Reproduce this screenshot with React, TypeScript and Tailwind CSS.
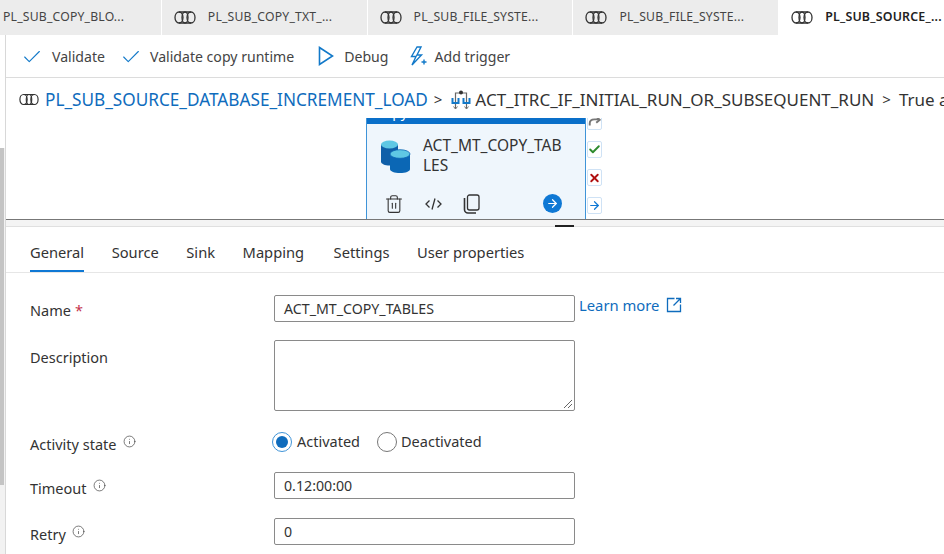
import { ArrowRight, Check, Info, Trash2, X } from 'lucide-react'
import type { ReactNode } from 'react'

const PipelineIcon = ({ className = '' }: { className?: string }) => (
  <svg viewBox="0 0 22 14" className={className} fill="none" stroke="currentColor" strokeWidth="1.3">
    <ellipse cx="5" cy="7" rx="4" ry="5.500" />
    <ellipse cx="11" cy="7" rx="3" ry="5.500" />
    <path d="M5 1.500h12M5 12.500h12" />
    <ellipse cx="17" cy="7" rx="4" ry="5.500" />
  </svg>
)

const IfIcon = () => (
  <svg viewBox="0 0 20 20" className="h-[20px] w-[20px]" fill="none">
    <path d="M4.500 8V3h11v5M4.500 6v13M15.500 6v13" stroke="#666" strokeWidth="1.2" />
    <circle cx="10" cy="2.500" r="2" fill="#333" />
    <path d="M1.500 8v5h6V8M12.500 8v5h6V8" stroke="#1279c9" strokeWidth="2" />
    <path d="M2.500 16.500l2 2.500 2-2.500M13.500 16.500l2 2.500 2-2.500" stroke="#777" strokeWidth="1" />
  </svg>
)

const DatabaseIcon = () => (
  <svg viewBox="0 0 30 33" className="h-[33px] w-[30px]">
    <path d="M0 4.500v17c0 2.500 4 4 8.500 4s8.500-1.500 8.500-4v-17z" fill="#0f5fa8" />
    <ellipse cx="8.500" cy="4.500" rx="8.500" ry="4" fill="#5fc8e4" />
    <path d="M9 14v15c0 2.500 4.500 4 10 4s10-1.500 10-4V14z" fill="#0b67b5" />
    <ellipse cx="19" cy="14" rx="10" ry="4.300" fill="#5fc8e4" stroke="#0b67b5" strokeWidth="0.8" />
  </svg>
)

const PlayIcon = () => (
  <svg viewBox="0 0 16 20" className="h-[20px] w-[16px] shrink-0" fill="none" stroke="#1279c9" strokeWidth="1.6">
    <path d="M1.500 1.500 14.500 10 1.500 18.500z" />
  </svg>
)

const TriggerIcon = () => (
  <svg viewBox="0 0 18 20" className="h-[20px] w-[18px] shrink-0" fill="none" stroke="#1279c9" strokeWidth="1.4">
    <path d="M8 1 2.500 10.500h4.500L3 19l9.500-10H8l4-8z" />
    <path d="M15 13.500v5M12.500 16h5" />
  </svg>
)

const CodeIcon = () => (
  <svg viewBox="0 0 17 14" className="h-[14px] w-[17px] shrink-0" fill="none" stroke="#333" strokeWidth="1.3">
    <path d="M4.500 3.500 1 7l3.500 3.500M12.500 3.500 16 7l-3.500 3.500M10 1.500 7 12.500" />
  </svg>
)

const CopyIcon = () => (
  <svg viewBox="0 0 17 20" className="h-[20px] w-[17px] shrink-0" fill="none" stroke="#333" strokeWidth="1.3">
    <rect x="4.500" y="1" width="11.500" height="15" rx="2" />
    <path d="M1.500 4v11.500a3.500 3.500 0 0 0 3.500 3.500h8" strokeWidth="1.600" />
  </svg>
)

const LinkOutIcon = () => (
  <svg viewBox="0 0 16 16" className="ml-[7px] h-[16px] w-[16px]" fill="none" stroke="currentColor" strokeWidth="1.3">
    <path d="M8.500 1.500h-7v13h13v-7M7.500 8.500l7-7M10 1.500h4.500V6" />
  </svg>
)

const RedoIcon = () => (
  <svg viewBox="0 0 15 11" className="h-[11px] w-[13px]" fill="none" stroke="#777" strokeWidth="2.200">
    <path d="M2 10V7.500C2 4.500 4.500 3 7.500 3H12" />
    <path d="M9.500 0 13.500 3.500 9.500 7" />
  </svg>
)

const Tab = ({ label, active, plain }: { label: string; active?: boolean; plain?: boolean }) => (
  <div
    className={`flex h-full items-center gap-[12px] border-r border-white tracking-[0.2px] ${
      active ? 'w-[165px] bg-white pl-[12px] text-[12.400px] font-semibold text-[#222]' : 'w-[206px] pl-[12px] text-[12.200px] text-[#444]'
    } ${plain ? '!w-[162px] !pl-[3px]' : ''}`}
  >
    {!plain && <PipelineIcon className="h-[15px] w-[22px] shrink-0 text-[#333]" />}
    <span className="whitespace-nowrap">{label}</span>
  </div>
)

const ToolButton = ({ icon, label, className }: { icon: ReactNode; label: string; className: string }) => (
  <div className={`flex items-center ${className}`}>
    {icon}
    <span className="text-[14.100px] text-[#444]">{label}</span>
  </div>
)

const FormLabel = ({ children, className = '' }: { children: ReactNode; className?: string }) => (
  <div className={`flex w-[244px] shrink-0 text-[14.500px] text-[#333] ${className}`}>{children}</div>
)

const Hint = ({ className = 'ml-[6px]' }: { className?: string }) => (
  <Info size={13} strokeWidth={1.3} className={`mt-[-7px] text-[#444] ${className}`} />
)

const Field = ({ value }: { value: string }) => (
  <div className="flex h-[27px] w-[301px] shrink-0 items-center rounded-[2px] border border-[#8a8a8a] pl-[9px] pt-[1px] text-[14.200px] text-[#333]">
    {value}
  </div>
)

const SideIcon = ({ children }: { children: ReactNode }) => (
  <div className="flex h-[17px] w-[15px] items-center justify-center rounded-[2px] border border-[#cfe2f5] bg-white">{children}</div>
)

export default function App() {
  return (
    <div className="h-[554px] w-[944px] overflow-hidden bg-white font-['Noto_Sans','Open_Sans',sans-serif]">
      <div className="flex h-[35px] bg-[#ececec]">
        <Tab label="PL_SUB_COPY_BLO..." plain />
        <Tab label="PL_SUB_COPY_TXT_..." />
        <Tab label="PL_SUB_FILE_SYSTE..." />
        <Tab label="PL_SUB_FILE_SYSTE..." />
        <Tab label="PL_SUB_SOURCE_..." active />
      </div>

      <div className="flex h-[519px]">
        <div className="flex w-[6px] shrink-0 flex-col border-r border-[#d8d8d8]">
          <div className="h-[113px]" />
          <div className="h-[337px] bg-[#f2f2f2]">
            <div className="h-full w-[4px] bg-[#c4c4c4]" />
          </div>
          <div className="flex-1 bg-[#f2f2f2]" />
        </div>

        <div className="min-w-0 flex-1">
          <div className="flex h-[43px] items-center border-b border-[#dcdcdc] pt-[1px]">
            <ToolButton
              className="ml-[15px] gap-[9px]"
              icon={<Check size={22} strokeWidth={1.2} className="shrink-0 text-[#1279c9]" />}
              label="Validate"
            />
            <ToolButton
              className="ml-[15px] gap-[8px]"
              icon={<Check size={22} strokeWidth={1.2} className="shrink-0 text-[#1279c9]" />}
              label="Validate copy runtime"
            />
            <ToolButton className="ml-[24px] gap-[10px]" icon={<PlayIcon />} label="Debug" />
            <ToolButton className="ml-[20px] gap-[8px]" icon={<TriggerIcon />} label="Add trigger" />
          </div>

          <div className="flex h-[40px] items-center whitespace-nowrap pl-[13px] pt-[3px] text-[17px] text-[#333]">
            <PipelineIcon className="h-[13px] w-[20px] shrink-0 text-[#333]" />
            <span className="ml-[6px] text-[17.200px] text-[#0f6cbd]">PL_SUB_SOURCE_DATABASE_INCREMENT_LOAD</span>
            <span className="ml-[6px] text-[15px]">&gt;</span>
            <span className="ml-[9px]"><IfIcon /></span>
            <span className="ml-[4px]">ACT_ITRC_IF_INITIAL_RUN_OR_SUBSEQUENT_RUN</span>
            <span className="ml-[8px] text-[15px]">&gt;</span>
            <span className="ml-[8px]">True a</span>
          </div>

          <div className="relative h-[102px] overflow-hidden border-b border-[#777]">
            <div className="absolute left-[360px] top-0 flex h-[101px] w-[220px] flex-col border-x border-[#3f94d8] bg-[#eff6fc]">
              <div className="h-[6px] overflow-hidden bg-[#0a6fc9]">
                <div className="ml-[8px] mt-[-10px] text-[14px] leading-[8px] text-white">Copy data</div>
              </div>
              <div className="mt-[11px] flex items-start">
                <div className="ml-[14px] mt-[5px]"><DatabaseIcon /></div>
                <div className="ml-[12px] w-[143px] break-all text-[15.500px] leading-[20px] text-[#333]">ACT_MT_COPY_TABLES</div>
              </div>
              <div className="mt-[19px] flex h-[19px] items-center text-[#333]">
                <Trash2 size={20} strokeWidth={1.3} className="ml-[17px] shrink-0" />
                <span className="ml-[21px]"><CodeIcon /></span>
                <span className="ml-[21px]"><CopyIcon /></span>
                <div className="ml-[63px] flex h-[19px] w-[19px] shrink-0 items-center justify-center rounded-full bg-[#0f78d4]">
                  <ArrowRight size={13} strokeWidth={2.2} className="text-white" />
                </div>
              </div>
            </div>
            <div className="absolute left-[581px] top-0 flex flex-col gap-[11px]">
              <div className="mt-[-5px]">
                <SideIcon><RedoIcon /></SideIcon>
              </div>
              <SideIcon><Check size={13} strokeWidth={3.5} className="text-[#2e8b2e]" /></SideIcon>
              <SideIcon><X size={16} strokeWidth={3.500} className="text-[#b01010]" /></SideIcon>
              <SideIcon><ArrowRight size={15} strokeWidth={2.2} className="text-[#0f78d4]" /></SideIcon>
            </div>
          </div>

          <div className="relative h-[7px] border-b border-[#e0e0e0] bg-[#f4f4f4]">
            <div className="absolute left-[549px] top-[5px] h-[2px] w-[19px] bg-[#222]" />
          </div>

          <div className="flex h-[46px] items-end gap-[27.500px] border-b border-[#e6e6e6] pl-[24px] text-[14.700px] text-[#333]">
            <span className="border-b-2 border-[#0f78d4] pb-[7px]">General</span>
            <span className="pb-[9px]">Source</span>
            <span className="pb-[9px]">Sink</span>
            <span className="pb-[9px]">Mapping</span>
            <span className="ml-[2px] pb-[9px]">Settings</span>
            <span className="pb-[9px]">User properties</span>
          </div>

          <div className="pl-[24px]">
            <div className="mt-[22px] flex items-start">
              <FormLabel className="mt-[5px]">Name <span className="ml-[4px] text-[#c4314b]">*</span></FormLabel>
              <Field value="ACT_MT_COPY_TABLES" />
              <span className="ml-[4px] mt-[-1px] flex items-center text-[14.800px] text-[#0f6cbd]">
                Learn more
                <LinkOutIcon />
              </span>
            </div>
            <div className="mt-[18px] flex items-start">
              <FormLabel className="mt-[7px]">Description</FormLabel>
              <div className="relative h-[71px] w-[301px] rounded-[2px] border border-[#8a8a8a]">
                <svg viewBox="0 0 10 10" className="absolute bottom-[1px] right-[1px] h-[10px] w-[10px]" stroke="#666">
                  <path d="M1 9 9 1M5 9l4-4" />
                </svg>
              </div>
            </div>
            <div className="mt-[21px] flex h-[20px] items-start">
              <FormLabel className="mt-[2px] items-center">Activity state <Hint className="ml-[7px]" /></FormLabel>
              <div className="flex h-[20px] items-center text-[14.500px] text-[#333]">
                <div className="ml-[-2px] flex h-[20px] w-[20px] items-center justify-center rounded-full border border-[#3f94d8]">
                  <div className="h-[12px] w-[12px] rounded-full bg-[#0f6cbd]" />
                </div>
                <span className="ml-[5px]">Activated</span>
                <div className="ml-[17px] h-[20px] w-[20px] rounded-full border border-[#777]" />
                <span className="ml-[4px]">Deactivated</span>
              </div>
            </div>
            <div className="mt-[20px] flex items-start">
              <FormLabel className="mt-[6px] items-center">Timeout <Hint /></FormLabel>
              <Field value="0.12:00:00" />
            </div>
            <div className="mt-[18px] flex items-start">
              <FormLabel className="mt-[6px] items-center">Retry <Hint /></FormLabel>
              <Field value="0" />
            </div>
          </div>
        </div>
      </div>
    </div>
  )
}
